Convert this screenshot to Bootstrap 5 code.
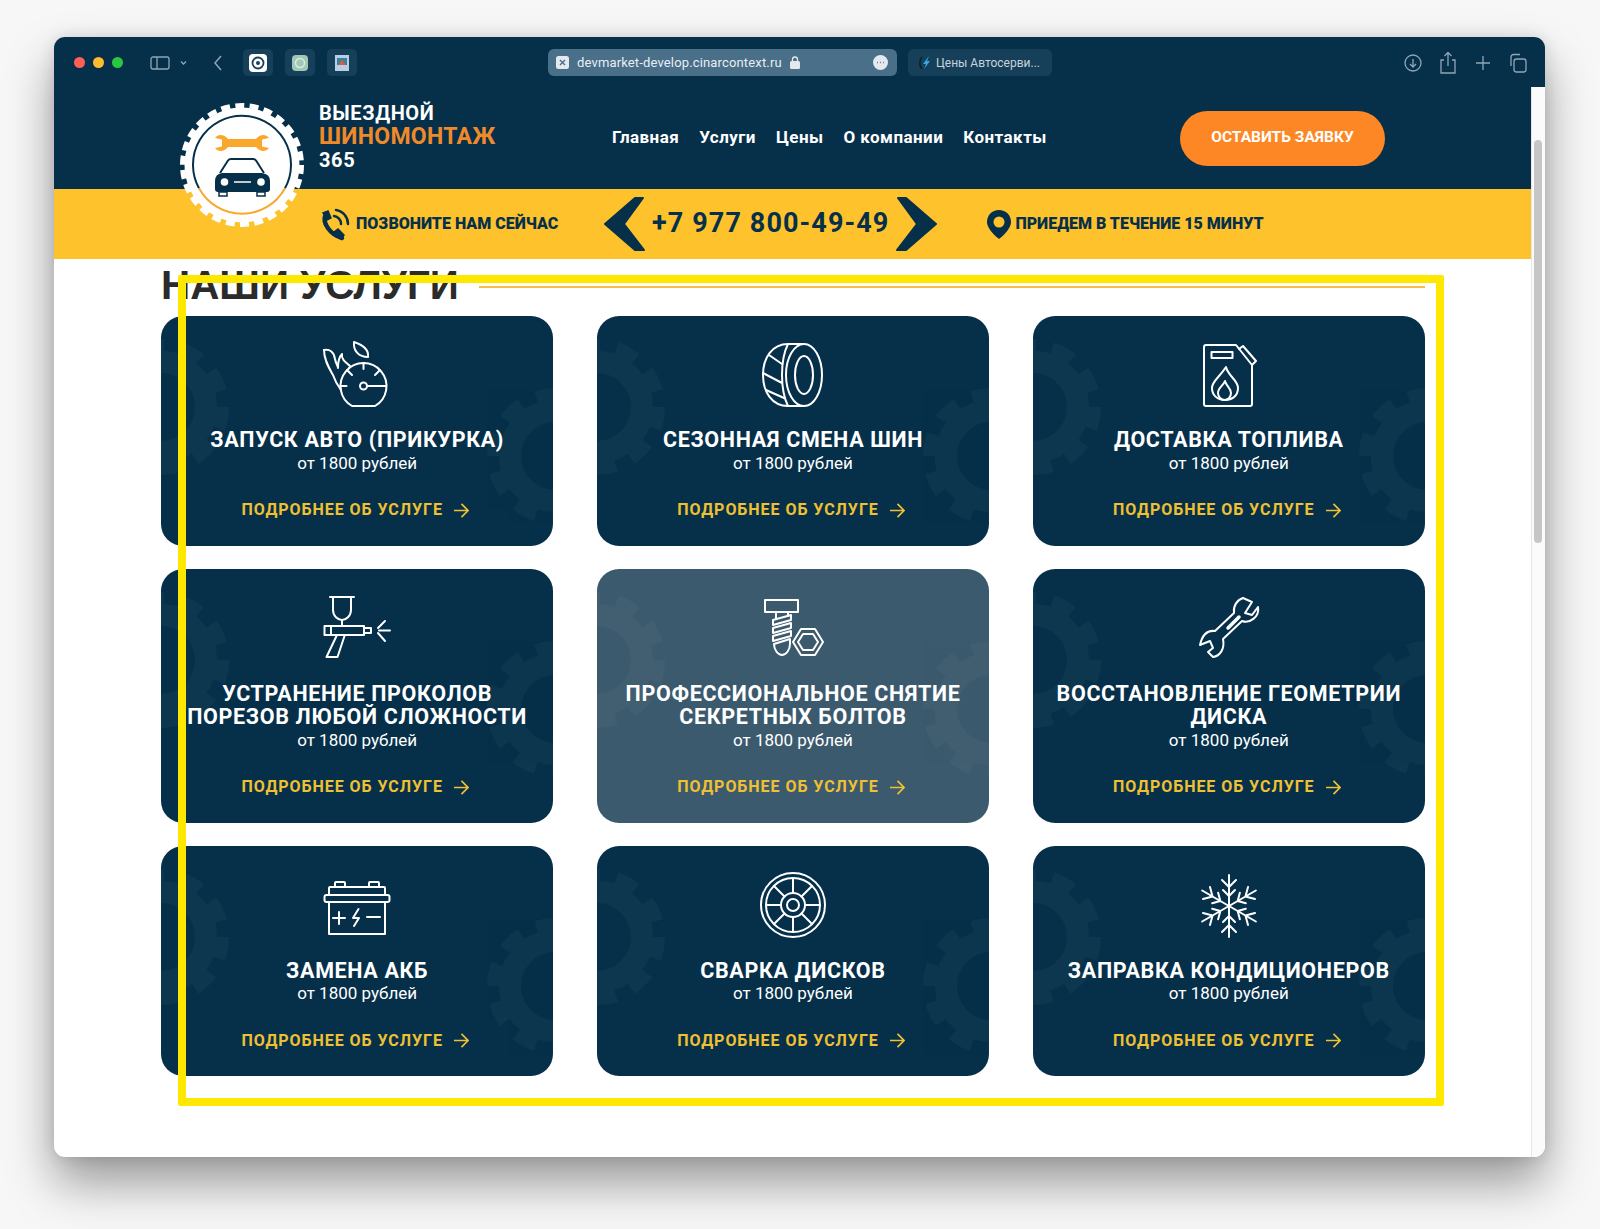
<!DOCTYPE html>
<html lang="ru">
<head>
  <meta charset="UTF-8" />
  <meta name="viewport" content="width=device-width, initial-scale=1" />
  <title>Цены Автосервис</title>
  <link href="https://cdn.jsdelivr.net/npm/bootstrap@5.3.2/dist/css/bootstrap.min.css" rel="stylesheet" />
  <style>
    :root { --navy: #06304a; --amber: #fec22d; --orange: #fd8724; }
    html, body { height: 1229px; overflow: hidden; }
    body { background: #f7f7f7; font-family: Roboto, "Liberation Sans", sans-serif; padding: 37px 55px 0 54px; }

    .mac-win { height: 1120px; background: #fff; border-radius: 11px; box-shadow: 0 26px 48px rgba(0,0,0,.38), 0 0 16px rgba(0,0,0,.12); overflow: hidden; position: relative; }
    .mac-bar { height: 50px; background: var(--navy); padding-left: 20px; padding-top: 1px; }
    .tl-dot { width: 11px; height: 11px; border-radius: 50%; }
    .back-ico { margin-left: 13px; margin-right: 16px; }
    .tab-chip { width: 30px; height: 27px; border-radius: 5px; background: #16405a; }
    .url-box { width: 349px; height: 27px; margin-left: 191px; background: #4a6f89; border-radius: 6px; color: #e8eef2; font-size: 13px; letter-spacing: .15px; padding: 0 9px 0 8px; }
    .tab-box { width: 144px; height: 27px; margin-left: 11px; background: #16405a; border-radius: 6px; color: #c6d3db; font-size: 12px; padding-left: 10px; }
    .bar-tools { margin-left: auto; margin-right: 18px; gap: 17px; }

    .page-pane { position: relative; height: 1070px; }
    .page-scroll { width: 14px; background: #fbfbfb; border-left: 1px solid #e6e6e6; flex-shrink: 0; padding-top: 53px; padding-left: 2px; }
    .page-thumb { width: 8px; height: 403px; background: #c6c6c6; border-radius: 4px; }
    .page-body { flex: 1; min-width: 0; }

    .site-head { height: 102px; background: var(--navy); padding-left: 265px; color: #fff; }
    .brand-txt { width: 293px; font-weight: 700; font-size: 20px; line-height: 23px; letter-spacing: .6px; margin-top: -2px; }
    .brand-txt b { display: block; color: #ef8a2a; font-size: 23px; font-weight: 700; letter-spacing: .3px; margin-bottom: 1px; }
    .site-nav { width: 568px; gap: 20px; }
    .site-nav .nav-link { padding: 0; color: #fff; font-weight: 700; font-size: 17px; letter-spacing: .45px; }
    .btn-lead { width: 205px; height: 55px; border-radius: 28px; background: var(--orange); border: 0; color: #fff; font-weight: 700; font-size: 15.500px; }
    .logo-badge { position: absolute; left: 123px; top: 13px; z-index: 3; }

    .call-row { height: 70px; background: var(--amber); color: var(--navy); font-weight: 900; padding-left: 265px; }
    .call-txt { font-size: 16px; }
    .call-num { font-size: 27px; font-weight: 700; letter-spacing: 1.100px; margin: -2px 7px 0; white-space: nowrap; }

    .svc-area { padding: 3px 106px 0 107px; }
    .svc-title { font-family: "Liberation Sans", Arial, sans-serif; font-weight: 700; font-size: 40.400px; line-height: 46px; color: #2b2b2b; margin: 0; white-space: nowrap; }
    .svc-rule { flex: 1; height: 2px; background: #f5c04a; margin-left: 20px; margin-top: 4px; }
    .svc-grid { --bs-gutter-x: 43.5px; --bs-gutter-y: 23.5px; margin-top: -16px; }

    .svc-card { --bs-card-bg: var(--navy); border-radius: 22px; overflow: hidden; padding: 24px 8px 23.5px; color: #fff; }
    .svc-card.is-active { --bs-card-bg: #3c5a6e; }
    .svc-gear { position: absolute; color: #fff; opacity: .028; width: 140px; height: 140px; }
    .svc-gear.g-left { left: -70px; top: 21px; }
    .svc-gear.g-right { right: -72px; top: 70px; }
    .svc-ico { width: 72px; height: 70px; display: block; margin: 0 auto 18.5px; fill: none; stroke: #fff; stroke-width: 2; stroke-linecap: round; stroke-linejoin: round; position: relative; }
    .svc-name { font-size: 21.500px; font-weight: 700; line-height: 23.500px; margin: 0; letter-spacing: .65px; position: relative; }
    .svc-price { font-size: 17px; line-height: 23.500px; position: relative; }
    .svc-more { margin-top: 23px; color: #f0c033; font-size: 16px; font-weight: 700; line-height: 24px; letter-spacing: .95px; text-decoration: none; position: relative; gap: 10px; padding-right: 4px; }

    .note-frame { position: absolute; left: 124px; top: 188px; width: 1266px; height: 831px; border: 8px solid #ffe800; border-radius: 2px; z-index: 4; pointer-events: none; }
  </style>
</head>
<body>

  <svg width="0" height="0" class="position-absolute">
    <symbol id="ic-gear" viewBox="-70 -70 140 140">
      <circle r="45" fill="none" stroke="currentColor" stroke-width="22"/>
      <circle r="62" fill="none" stroke="currentColor" stroke-width="12" stroke-dasharray="22 16.95"/>
    </symbol>
    <symbol id="ic-start" viewBox="0 0 72 70">
      <path d="M31 66A23 23 0 1 1 54 66Z"/>
      <path d="M42.500 23v6M19.500 46h6M26 30l5 5M59 30l-5 5M46 46h19"/>
      <circle cx="42.500" cy="46" r="3.500"/>
      <path d="M3 10C3 20 8 28 12 35C14 41 17 46 20 50"/>
      <path d="M3 10C9 9 13 12 14 19C15 24 17 26 17 28C17 22 18 17 21 14C20 19 24 22 29 26"/>
      <path d="M33 2C42 5 48 10 47 17C38 17 32 11 33 2Z"/>
    </symbol>
    <symbol id="ic-tire" viewBox="0 0 72 70">
      <ellipse cx="47" cy="35" rx="18" ry="31"/>
      <ellipse cx="47" cy="35" rx="9" ry="19"/>
      <path d="M47 4H31C15 4 6 18 6 35C6 52 15 66 31 66H47"/>
      <path d="M31 4C26 14 25 24 25 35C25 46 26 56 31 66M12 15L25 24M6 33L25 43M9 50L27 58"/>
    </symbol>
    <symbol id="ic-fuel" viewBox="0 0 72 70">
      <path d="M13 5H43L59 25V64a2 2 0 0 1-2 2H13a2 2 0 0 1-2-2V7a2 2 0 0 1 2-2Z"/>
      <rect x="18.500" y="12" width="21" height="6"/>
      <path d="M46 9L50 6L63 21L59 25"/>
      <path d="M33 27C35 36 45 40 45 48C45 56 39 60 32 60C24 60 19 55 19 48C19 41 26 38 33 27Z"/>
      <path d="M32 41C33 46 38 48 38 53C38 57 35 60 32 60C28 60 25 57 25 53C25 48 30 46 32 41Z"/>
    </symbol>
    <symbol id="ic-spray" viewBox="0 0 72 70">
      <path d="M9 4H33M12 4V17C12 23 17 27 21 27C25 27 30 23 30 17V4M21 27V33"/>
      <path d="M3.500 33H43V42H3.500ZM10 33V42M43 35H50V40H43"/>
      <path d="M15.500 43L5.500 64H16.500L23.500 43"/>
      <path d="M57 35L64 28M58 37.500H69M57 40L64 48"/>
    </symbol>
    <symbol id="ic-bolt" viewBox="0 0 72 70">
      <rect x="8" y="7" width="33" height="12"/>
      <path d="M19 19V26M31 19V23"/>
      <path d="M16 27L34 22V27L16 32ZM16 35L34 30V35L16 40ZM16 43L34 38V43L16 48Z"/>
      <path d="M17 51L33 46V51C33 57 29 62 25 62C21 62 17 57 17 51Z"/>
      <path d="M44 36H58L66 49L58 62H44L36 49Z"/>
      <path d="M46 41H56L61 49L56 57H46L41 49Z"/>
    </symbol>
    <symbol id="ic-wrench" viewBox="0 0 72 70">
      <path d="M50 5C44 7 40 13 41 20L22 38C14 37 9 43 7 52L17 48L20 55L15 59L20 64C27 63 32 56 30 46L49 28C56 31 67 24 65 14L59 22L52 20L59 9Z"/>
      <path d="M35 35L46 24" stroke-width="3.500"/>
    </symbol>
    <symbol id="ic-akb" viewBox="0 0 72 70">
      <path d="M14 17V13a1 1 0 0 1 1-1h8a1 1 0 0 1 1 1v4M48 17V13a1 1 0 0 1 1-1h8a1 1 0 0 1 1 1v4"/>
      <path d="M8 25V18a1 1 0 0 1 1-1H63a1 1 0 0 1 1 1V25"/>
      <rect x="3.500" y="25" width="65" height="7" rx="2"/>
      <path d="M8 32V64H64V32"/>
      <path d="M12 48H24M18 42V54M37.500 39L32 48H38L33 56M46 47H59"/>
    </symbol>
    <symbol id="ic-wheel" viewBox="0 0 72 70">
      <circle cx="36" cy="35" r="32"/>
      <circle cx="36" cy="35" r="27"/>
      <circle cx="36" cy="35" r="12"/>
      <circle cx="36" cy="35" r="6"/>
      <path d="M36 8V23M36 47V62M9 35H24M48 35H63M17 16L27.500 26.500M44.500 43.500L55 54M55 16L44.500 26.500M27.500 43.500L17 54"/>
    </symbol>
    <symbol id="ic-snow" viewBox="0 0 72 70">
      <g id="snow-arm">
        <path d="M36 36V5M29 10L36 17L43 10M30 20L36 26L42 20"/>
      </g>
      <use href="#snow-arm" transform="rotate(60 36 36)"/>
      <use href="#snow-arm" transform="rotate(120 36 36)"/>
      <use href="#snow-arm" transform="rotate(180 36 36)"/>
      <use href="#snow-arm" transform="rotate(240 36 36)"/>
      <use href="#snow-arm" transform="rotate(300 36 36)"/>
    </symbol>
  </svg>

  <div class="mac-win">
    <div class="mac-bar d-flex align-items-center">
      <div class="d-flex gap-2"><span class="tl-dot" style="background:#ff5f57"></span><span class="tl-dot" style="background:#febc2e"></span><span class="tl-dot" style="background:#28c840"></span></div>
      <svg class="ms-4" width="53" height="16" viewBox="0 0 53 16" fill="none" stroke="#8fa6b5" stroke-width="1.300">
        <rect x="4" y="2" width="18" height="12" rx="2"/><path d="M10 2V14"/><path d="M34 6.500L36.500 9L39 6.500"/>
      </svg>
      <svg class="back-ico" width="10" height="16" viewBox="0 0 10 16" fill="none" stroke="#8fa6b5" stroke-width="1.500"><path d="M8 1L2 8L8 15"/></svg>
      <div class="d-flex gap-2 ps-1">
        <span class="tab-chip d-flex align-items-center justify-content-center"><svg width="18" height="18" viewBox="0 0 18 18"><rect width="18" height="18" rx="4" fill="#fff"/><circle cx="9" cy="9" r="5.500" fill="none" stroke="#16405a" stroke-width="1.800"/><circle cx="9" cy="9" r="2" fill="#16405a"/></svg></span>
        <span class="tab-chip d-flex align-items-center justify-content-center ms-1"><svg width="16" height="16" viewBox="0 0 16 16"><rect width="16" height="16" rx="4" fill="#9fc9b4"/><circle cx="8" cy="8" r="4.500" fill="none" stroke="#dcebe3" stroke-width="1.500"/></svg></span>
        <span class="tab-chip d-flex align-items-center justify-content-center ms-1"><svg width="14" height="16" viewBox="0 0 14 16"><rect width="14" height="16" fill="#b8cde6"/><rect x="2" y="3" width="10" height="7" fill="#3f7f9c"/><path d="M3 10L7 5L11 10Z" fill="#d0603f"/></svg></span>
      </div>
      <div class="url-box d-flex align-items-center">
        <svg width="13" height="13" viewBox="0 0 13 13" class="me-2 flex-shrink-0"><rect width="13" height="13" rx="2.500" fill="#e3e9ee"/><path d="M4 4L9 9M9 4L4 9" stroke="#4a6f89" stroke-width="1.400"/></svg>
        <span>devmarket-develop.cinarcontext.ru</span>
        <svg width="10" height="13" viewBox="0 0 10 13" class="ms-2"><rect y="5" width="10" height="8" rx="1.500" fill="#e3e9ee"/><path d="M2.500 5V3.500a2.500 2.500 0 0 1 5 0V5" fill="none" stroke="#e3e9ee" stroke-width="1.300"/></svg>
        <svg width="15" height="15" viewBox="0 0 15 15" class="ms-auto"><circle cx="7.500" cy="7.500" r="7.500" fill="#e3e9ee"/><path d="M4 7.500H4.800M7.100 7.500H7.900M10.200 7.500H11" stroke="#4a6f89" stroke-width="1.600"/></svg>
      </div>
      <div class="tab-box d-flex align-items-center">
        <svg width="14" height="14" viewBox="0 0 14 14" class="me-1 flex-shrink-0"><path d="M4 1C1 4 1 10 4 13" fill="none" stroke="#0b1f2c" stroke-width="1.500"/><path d="M11 0L5 8H8L6 13L12 5H9Z" fill="#3ba4e6"/></svg>
        <span>Цены Автосерви...</span>
      </div>
      <div class="bar-tools d-flex align-items-center">
        <svg width="18" height="20" viewBox="0 0 18 20" fill="none" stroke="#8fa6b5" stroke-width="1.300"><circle cx="9" cy="10" r="8"/><path d="M9 6V14M6 11L9 14L12 11"/></svg>
        <svg width="18" height="24" viewBox="0 0 18 24" fill="none" stroke="#8fa6b5" stroke-width="1.300"><path d="M5 9H2V22H16V9H13M9 15V2M5.500 5L9 1.500L12.500 5"/></svg>
        <svg width="18" height="18" viewBox="0 0 18 18" fill="none" stroke="#8fa6b5" stroke-width="1.300"><path d="M9 2V16M2 9H16"/></svg>
        <svg width="18" height="20" viewBox="0 0 18 20" fill="none" stroke="#8fa6b5" stroke-width="1.300"><rect x="5" y="6" width="12" height="13" rx="2.500"/><path d="M2 13V4a2.500 2.500 0 0 1 2.500-2.500H11"/></svg>
      </div>
    </div>

    <div class="page-pane d-flex">
      <div class="page-body">
        <header class="site-head d-flex align-items-center position-relative">
          <div class="brand-txt">ВЫЕЗДНОЙ<b>ШИНОМОНТАЖ</b>365</div>
          <nav class="nav site-nav">
            <a class="nav-link" href="#">Главная</a>
            <a class="nav-link" href="#">Услуги</a>
            <a class="nav-link" href="#">Цены</a>
            <a class="nav-link" href="#">О компании</a>
            <a class="nav-link" href="#">Контакты</a>
          </nav>
          <a class="btn btn-lead d-flex align-items-center justify-content-center" href="#">ОСТАВИТЬ ЗАЯВКУ</a>
          <svg class="logo-badge" width="130" height="130" viewBox="0 0 130 130">
            <circle cx="65" cy="65" r="57.500" fill="#fff"/>
            <circle cx="65" cy="65" r="59.500" fill="none" stroke="#fff" stroke-width="5" stroke-dasharray="9 5.380"/>
            <path d="M22 88.300A49 49 0 1 1 108 88.300" fill="none" stroke="#06304a" stroke-width="2"/>
            <path d="M22 88.300A49 49 0 0 0 108 88.300" fill="none" stroke="#f9a82b" stroke-width="2"/>
            <path transform="translate(0 1)" d="M38 37C41 33 47 33 51 38H79C83 33 89 33 92 37L85 38.500V45.500L92 47C89 51 83 51 79 46H51C47 51 41 51 38 47L45 45.500V38.500Z" fill="#f9a82b"/>
            <g transform="translate(0 2)">
              <path d="M43 71L51 58.500Q52 57 54 57H76Q78 57 79 58.500L87 71" fill="none" stroke="#06304a" stroke-width="2"/>
              <path d="M38 79Q38 72 45 71H85Q93 72 93 79V87Q93 90 90 90H41Q38 90 38 87Z" fill="#06304a"/>
              <path d="M42 90H50V94H42ZM80 90H88V94H80Z" fill="#fff" stroke="#06304a" stroke-width="1.500"/>
              <circle cx="47.500" cy="80" r="3.800" fill="#fff"/><circle cx="84" cy="80" r="3.800" fill="#fff"/>
              <path d="M57 80H74" stroke="#fff" stroke-width="1.500"/>
            </g>
          </svg>
        </header>

        <div class="call-row d-flex align-items-center">
          <svg width="33" height="34" viewBox="0 0 33 34" fill="none" stroke="#06304a" stroke-linecap="round" class="flex-shrink-0">
            <path d="M7 7C2 16 12 28 23 31" stroke-width="4.500"/>
            <path d="M4 6L9 4L12 11L8 13ZM15 25L19 22L25 28L22 32Z" fill="#06304a" stroke-width="1.500"/>
            <path d="M15 9a8 8 0 0 1 7 8M17 3a14 14 0 0 1 12 14" stroke-width="2.500"/>
          </svg>
          <span class="call-txt ms-1" style="width:247px">ПОЗВОНИТЕ НАМ СЕЙЧАС</span>
          <svg width="42" height="56" viewBox="0 0 42 56" fill="#06304a" stroke="#06304a" stroke-width="2" stroke-linejoin="round" class="flex-shrink-0"><path d="M32 2H40L21 28L41 54H32L2 28Z"/></svg>
          <span class="call-num">+7 977 800-49-49</span>
          <svg width="42" height="56" viewBox="0 0 42 56" fill="#06304a" stroke="#06304a" stroke-width="2" stroke-linejoin="round" class="flex-shrink-0"><path d="M10 2H2L21 28L1 54H10L40 28Z"/></svg>
          <svg width="24" height="29" viewBox="0 0 24 29" class="flex-shrink-0" style="margin-left:49px"><path d="M12 0C5 0 0 5 0 12C0 20 12 29 12 29S24 20 24 12C24 5 19 0 12 0Z" fill="#06304a"/><circle cx="12" cy="12" r="5.500" fill="#fec22d"/></svg>
          <span class="call-txt ms-1">ПРИЕДЕМ В ТЕЧЕНИЕ 15 МИНУТ</span>
        </div>

        <main class="svc-area">
          <div class="d-flex align-items-center">
            <h2 class="svc-title">НАШИ УСЛУГИ</h2>
            <div class="svc-rule"></div>
          </div>
          <div id="svcGrid" class="row row-cols-3 svc-grid"></div>
        </main>
      </div>
      <div class="page-scroll"><div class="page-thumb"></div></div>
      <div class="note-frame"></div>
    </div>
  </div>

  <script>
    const uslugi = [
      { ico: 'start', name: 'ЗАПУСК АВТО (ПРИКУРКА)' },
      { ico: 'tire', name: 'СЕЗОННАЯ СМЕНА ШИН' },
      { ico: 'fuel', name: 'ДОСТАВКА ТОПЛИВА' },
      { ico: 'spray', name: 'УСТРАНЕНИЕ ПРОКОЛОВ<br>ПОРЕЗОВ ЛЮБОЙ СЛОЖНОСТИ' },
      { ico: 'bolt', name: 'ПРОФЕССИОНАЛЬНОЕ СНЯТИЕ<br>СЕКРЕТНЫХ БОЛТОВ', active: true },
      { ico: 'wrench', name: 'ВОССТАНОВЛЕНИЕ ГЕОМЕТРИИ<br>ДИСКА' },
      { ico: 'akb', name: 'ЗАМЕНА АКБ' },
      { ico: 'wheel', name: 'СВАРКА ДИСКОВ' },
      { ico: 'snow', name: 'ЗАПРАВКА КОНДИЦИОНЕРОВ' }
    ];

    document.getElementById('svcGrid').innerHTML = uslugi.map(u => `
      <div class="col">
        <div class="card h-100 border-0 text-center svc-card ${u.active ? 'is-active' : ''}">
          <svg class="svc-gear g-left"><use href="#ic-gear"/></svg>
          <svg class="svc-gear g-right"><use href="#ic-gear"/></svg>
          <svg class="svc-ico"><use href="#ic-${u.ico}"/></svg>
          <h3 class="svc-name">${u.name}</h3>
          <div class="svc-price">от 1800 рублей</div>
          <a class="svc-more d-flex align-items-center justify-content-center" href="#">ПОДРОБНЕЕ ОБ УСЛУГЕ
            <svg width="16" height="15" viewBox="0 0 17 16" fill="none" stroke="#f0c033" stroke-width="1.800"><path d="M1 8H16M9 1L16 8L9 15"/></svg>
          </a>
        </div>
      </div>`).join('');
  </script>
  <script src="https://cdn.jsdelivr.net/npm/bootstrap@5.3.2/dist/js/bootstrap.bundle.min.js"></script>
</body>
</html>
